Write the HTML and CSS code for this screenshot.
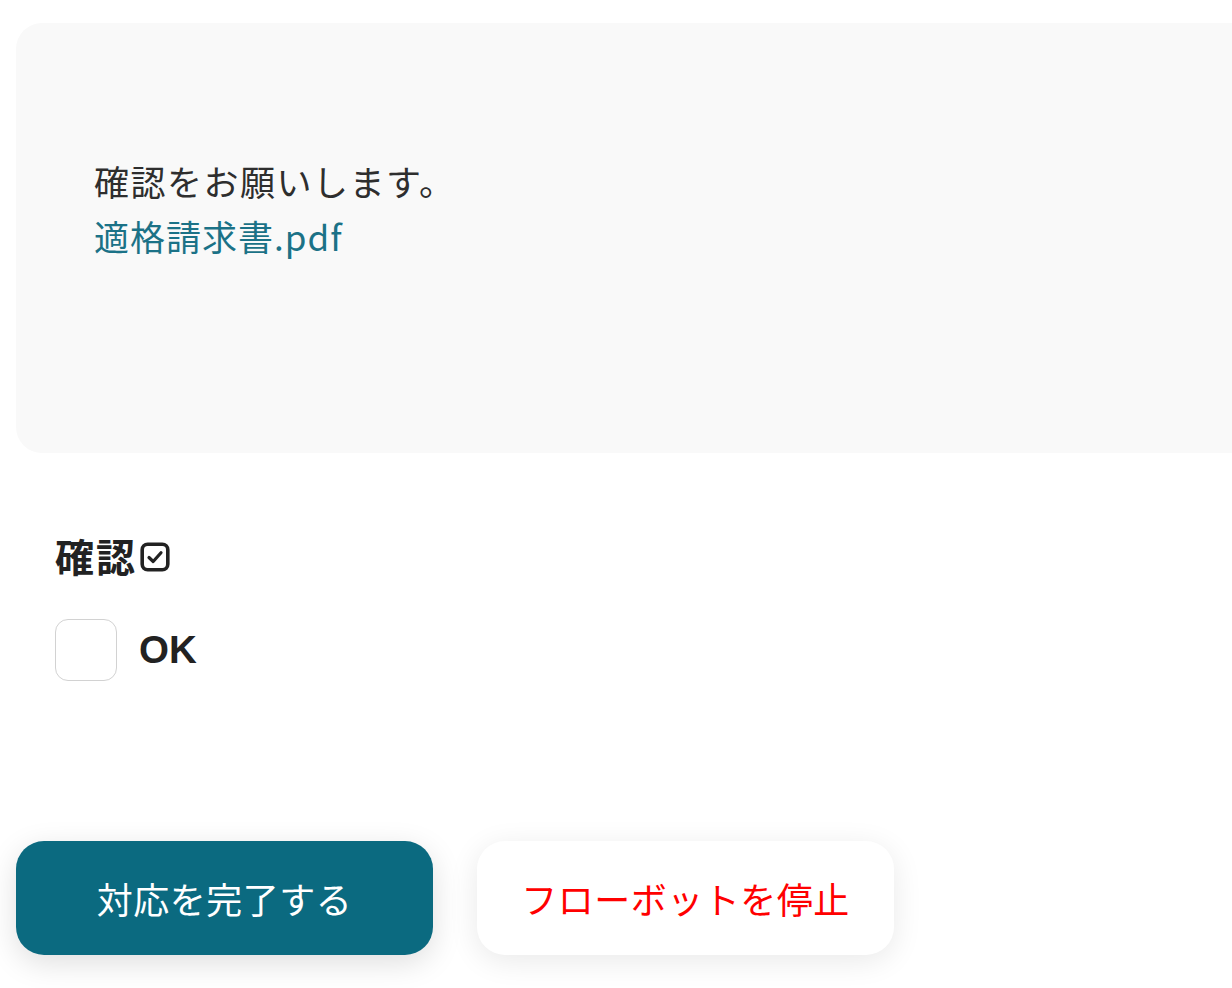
FILE: index.html
```html
<!DOCTYPE html>
<html lang="ja">
<head>
<meta charset="utf-8">
<link rel="stylesheet" href="styles.css">
</head>
<body>
<div class="page">
  <div class="message">
    <p class="msg-line">確認をお願いします。</p>
    <a class="msg-link" href="#">適格請求書.pdf</a>
  </div>
  <div class="field">
    <div class="field-label">確認<svg class="label-icon" viewBox="0 0 30 30" width="30" height="30"><rect x="2.2" y="2.2" width="25.6" height="25.6" rx="5.5" fill="none" stroke="#222" stroke-width="3.6"/><path d="M9 15.5 L13.2 19.5 L21 10.8" fill="none" stroke="#222" stroke-width="3.2" stroke-linecap="round" stroke-linejoin="round"/></svg></div>
    <label class="check-row"><span class="check-box"></span><span class="check-text">OK</span></label>
  </div>
  <div class="actions">
    <button class="btn btn-primary">対応を完了する</button>
    <button class="btn btn-stop">フローボットを停止</button>
  </div>
</div>
</body>
</html>
```

FILE: styles.css
```css
html, body {
  margin: 0;
  padding: 0;
  background: #ffffff;
  overflow: hidden;
}
body {
  font-family: "Noto Sans CJK JP", "Noto Sans", sans-serif;
  color: #2b2b2b;
}
.page {
  padding: 23px 0 60px 16px;
  width: 1260px;
}
.message {
  background: #f9f9f9;
  border-radius: 26px;
  height: 430px;
  box-sizing: border-box;
  padding: 130px 0 0 78px;
  display: flex;
  flex-direction: column;
  align-items: flex-start;
}
.msg-line {
  margin: 0;
  font-size: 35px;
  line-height: 55px;
  letter-spacing: 1.5px;
  color: #2e2e2e;
}
.msg-link {
  font-size: 35px;
  line-height: 55px;
  letter-spacing: 1px;
  color: #1b7287;
  text-decoration: none;
}
.field {
  padding: 78px 0 0 39px;
  display: flex;
  flex-direction: column;
  gap: 40px;
}
.field-label {
  display: flex;
  align-items: center;
  font-size: 39px;
  font-weight: 700;
  line-height: 48px;
  letter-spacing: 2px;
  color: #222;
}
.label-icon {
  margin-left: 3px;
  margin-top: 4px;
}
.check-row {
  display: flex;
  align-items: center;
  gap: 22px;
}
.check-box {
  width: 62px;
  height: 62px;
  box-sizing: border-box;
  border: 1.5px solid #d2d2d2;
  border-radius: 13px;
  background: #fff;
}
.check-text {
  font-family: "Liberation Sans", "Noto Sans", sans-serif;
  font-size: 38.5px;
  font-weight: 700;
  color: #222;
}
.actions {
  display: flex;
  gap: 44px;
  margin-top: 160px;
}
.btn {
  width: 417px;
  height: 114px;
  border: none;
  border-radius: 28px;
  font-family: "Noto Sans CJK JP", "Noto Sans", sans-serif;
  font-size: 36px;
  letter-spacing: 0.5px;
  cursor: pointer;
}
.btn-primary {
  background: #0b6a80;
  color: #ffffff;
  box-shadow: 0 8px 30px rgba(0, 0, 0, 0.13);
}
.btn-stop {
  background: #ffffff;
  color: #ff0000;
  box-shadow: 0 6px 30px rgba(0, 0, 0, 0.09);
}
```
